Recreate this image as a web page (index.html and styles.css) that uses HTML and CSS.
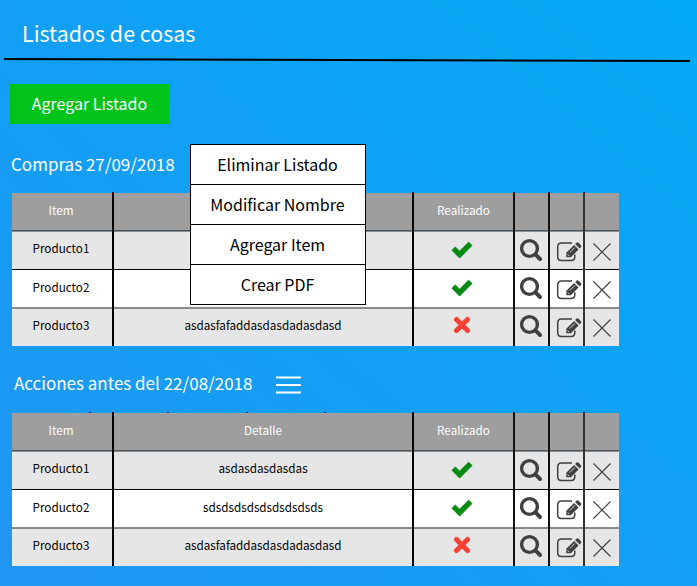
FILE: index.html
```
<!DOCTYPE html>
<html lang="es">
<head>
<meta charset="utf-8">
<title>Listados de cosas</title>
<link rel="stylesheet" href="styles.css">
</head>
<body>
<svg class="defs" width="0" height="0" aria-hidden="true">
  <symbol id="check" viewBox="0 0 22 18"><path d="M1 9.300L4.300 6L8.600 10.200L17.600 1.200L21 4.500L8.600 17Z" fill="#068a12" stroke="#068a12" stroke-width="1" stroke-linejoin="round"/></symbol>
  <symbol id="cross" viewBox="0 0 18 18"><path d="M3.500 3.500L14.500 14.500M14.500 3.500L3.500 14.500" fill="none" stroke="#f44336" stroke-width="5" stroke-linecap="round"/></symbol>
  <symbol id="search" viewBox="0 0 24 24"><circle cx="10.500" cy="10.500" r="7.900" fill="none" stroke="#404040" stroke-width="3.400"/><path d="M16.400 16.400L21 21" stroke="#404040" stroke-width="4" stroke-linecap="round"/></symbol>
  <symbol id="edit" viewBox="0 0 26 22"><path d="M16 2H5.500Q1.700 2 1.700 5.800V15.800Q1.700 19.600 5.500 19.600H15Q18.800 19.600 18.800 15.800V13.500" fill="none" stroke="#404040" stroke-width="1.500"/><path d="M10.300 16.300V11.800L18.100 4L22.600 8.500L14.800 16.300Z M19.100 3L20.700 1.500Q21.500 .8 22.400 1.600L25 4.200Q25.700 5.100 25 5.900L23.600 7.500Z" fill="#404040"/><path d="M13.800 11.500L18.900 6.400M11.600 13.300L13.300 15" stroke="#e6e6e6" stroke-width=".9"/></symbol>
  <symbol id="close" viewBox="0 0 18 18"><path d="M.5 .5L17.500 17.500M17.500 .5L.5 17.500" fill="none" stroke="#404040" stroke-width="1.100"/></symbol>
</svg>
<header class="header">
  <h1 class="title">Listados de cosas</h1>
  <svg class="rule" viewBox="0 0 686 4"><path d="M0 1L686 3" stroke="#000" stroke-width="2"/></svg>
</header>
<main class="content">
  <button class="add">Agregar Listado</button>

  <section class="list">
    <div class="list-head">
      <h2 class="list-title">Compras 27/09/2018</h2>
      <ul class="menu">
        <li>Eliminar Listado</li>
        <li>Modificar Nombre</li>
        <li>Agregar Item</li>
        <li>Crear PDF</li>
      </ul>
    </div>
    <div class="table">
      <div class="row head"><span>Item</span><span></span><span>Realizado</span><span></span><span></span><span></span></div>
      <div class="row first"><span>Producto1</span><span></span><span><svg class="check"><use href="#check"/></svg></span><span><svg class="search"><use href="#search"/></svg></span><span><svg class="edit"><use href="#edit"/></svg></span><span><svg class="close"><use href="#close"/></svg></span></div>
      <div class="row white"><span>Producto2</span><span></span><span><svg class="check"><use href="#check"/></svg></span><span><svg class="search"><use href="#search"/></svg></span><span><svg class="edit"><use href="#edit"/></svg></span><span><svg class="close"><use href="#close"/></svg></span></div>
      <div class="row last"><span>Producto3</span><span>asdasfafaddasdasdadasdasd</span><span><svg class="cross"><use href="#cross"/></svg></span><span><svg class="search"><use href="#search"/></svg></span><span><svg class="edit"><use href="#edit"/></svg></span><span><svg class="close"><use href="#close"/></svg></span></div>
    </div>
  </section>

  <section class="list second">
    <div class="list-head">
      <h2 class="list-title">Acciones antes del 22/08/2018</h2>
      <svg class="burger" viewBox="0 0 25 18"><path d="M0 1.500H25M0 9H25M0 16.500H25" stroke="#fff" stroke-width="2"/></svg>
    </div>
    <div class="table">
      <div class="row head"><span>Item</span><span>Detalle</span><span>Realizado</span><span></span><span></span><span></span></div>
      <div class="row first"><span>Producto1</span><span>asdasdasdasdas</span><span><svg class="check"><use href="#check"/></svg></span><span><svg class="search"><use href="#search"/></svg></span><span><svg class="edit"><use href="#edit"/></svg></span><span><svg class="close"><use href="#close"/></svg></span></div>
      <div class="row white"><span>Producto2</span><span>sdsdsdsdsdsdsdsdsds</span><span><svg class="check"><use href="#check"/></svg></span><span><svg class="search"><use href="#search"/></svg></span><span><svg class="edit"><use href="#edit"/></svg></span><span><svg class="close"><use href="#close"/></svg></span></div>
      <div class="row last"><span>Producto3</span><span>asdasfafaddasdasdadasdasd</span><span><svg class="cross"><use href="#cross"/></svg></span><span><svg class="search"><use href="#search"/></svg></span><span><svg class="edit"><use href="#edit"/></svg></span><span><svg class="close"><use href="#close"/></svg></span></div>
    </div>
  </section>
</main>
</body>
</html>
```

FILE: styles.css
```
* { box-sizing: border-box; }
body {
  margin: 0;
  height: 586px;
  overflow: hidden;
  font-family: "Noto Sans CJK SC", "Open Sans", sans-serif;
  background: linear-gradient(to top right, #2196f3, #03a9f4);
  color: #000;
}
svg { display: block; flex: none; }
.defs { position: absolute; }
.header { height: 84px; padding: 16px 7px 0 4px; }
.title { margin: 0 0 8px 18px; font-size: 21.45px; line-height: 34px; font-weight: 400; color: #fff; }
.rule { width: 686px; height: 4px; }
.content { padding-left: 10px; }
.add {
  display: block;
  width: 159px;
  height: 40px;
  padding: 0 0 2px 0;
  border: 0;
  background: #00c41a;
  color: #fff;
  font: 16px/38px "Noto Sans CJK SC", sans-serif;
}
.list-head { position: relative; display: flex; align-items: center; height: 69px; padding: 0 0 0 1px; }
.list-title { margin: 0 0 -10px; font-size: 17px; line-height: 26px; font-weight: 400; color: #fff; }
.second .list-head { height: 67px; padding-left: 4px; gap: 24px; }
.second .list-title { margin-bottom: -6px; }
.burger { width: 25px; height: 18px; margin-bottom: -11px; }
.menu {
  position: absolute;
  z-index: 2;
  left: 180px;
  top: 20px;
  width: 176px;
  margin: 0;
  padding: 0;
  list-style: none;
  border: 1px solid #000;
  background: #fff;
  font-size: 16px;
  line-height: 39px;
  text-align: center;
}
.menu li { padding-right: 1px; }
.menu li + li { border-top: 1px solid #000; }
.table { position: relative; width: 607px; margin-left: 2px; }
/* hairline ticks along the top edge of the second table */
.second .table::before {
  content: "";
  position: absolute;
  left: 77px;
  top: -1px;
  width: 240px;
  height: 1px;
  background: repeating-linear-gradient(to right, #123 0 2px, transparent 2px 78.3px);
}
.row {
  display: grid;
  grid-template-columns: 102px 300px 101px 35px 35px 34px;
  height: 38px;
  font-size: 11.7px;
  line-height: 18px;
}
.row span {
  position: relative;
  display: flex;
  justify-content: center;
  align-items: center;
  padding: 0 2px 5px 0;
  background: #e6e6e6;
  border-right: 2px solid #000;
  box-shadow: inset 0 -1px #000;
}
.row span:nth-child(2) { padding-right: 0; }
.row span:nth-child(3) { padding-right: 0; border-right-color: #111; }
.row span:nth-child(4) { padding: 0 1px 3px 0; border-right-color: #111; }
.row span:nth-child(5) { padding: 0 0 0 5px; border-right-color: #333; }
.row span:nth-child(6) { padding: 1px 0 0; border-right: 0; }
.row.first span:nth-child(-n+3) { padding-bottom: 7px; }
.row.first span:nth-child(n+5) { padding-top: 2px; }
.row.head { height: 39px; color: #fff; }
.row.head span { background: #9e9e9e; box-shadow: inset 0 -1px #858f98, inset 0 -2px #505356; padding-bottom: 6px; }
.row.head span:not(:last-child)::before { content: ""; position: absolute; top: -1px; right: -2px; width: 2px; height: 1px; background: #000; }
.row.white { height: 39px; }
.row.white span { background: #fff; box-shadow: inset 0 -2px #868b8f; }
.row.white span:nth-child(n+5) { padding-top: 0; }
.row.last { height: 37px; }
.row.last span { box-shadow: none; }
.row .check { width: 22px; height: 18px; margin: 2px 3px 0 0; }
.row.first .check { margin-top: 5px; }
.row .cross { width: 18px; height: 18px; margin-right: 3px; }
.search { width: 24px; height: 24px; }
.edit { width: 26px; height: 22px; }
.close { width: 18px; height: 18px; }
```
